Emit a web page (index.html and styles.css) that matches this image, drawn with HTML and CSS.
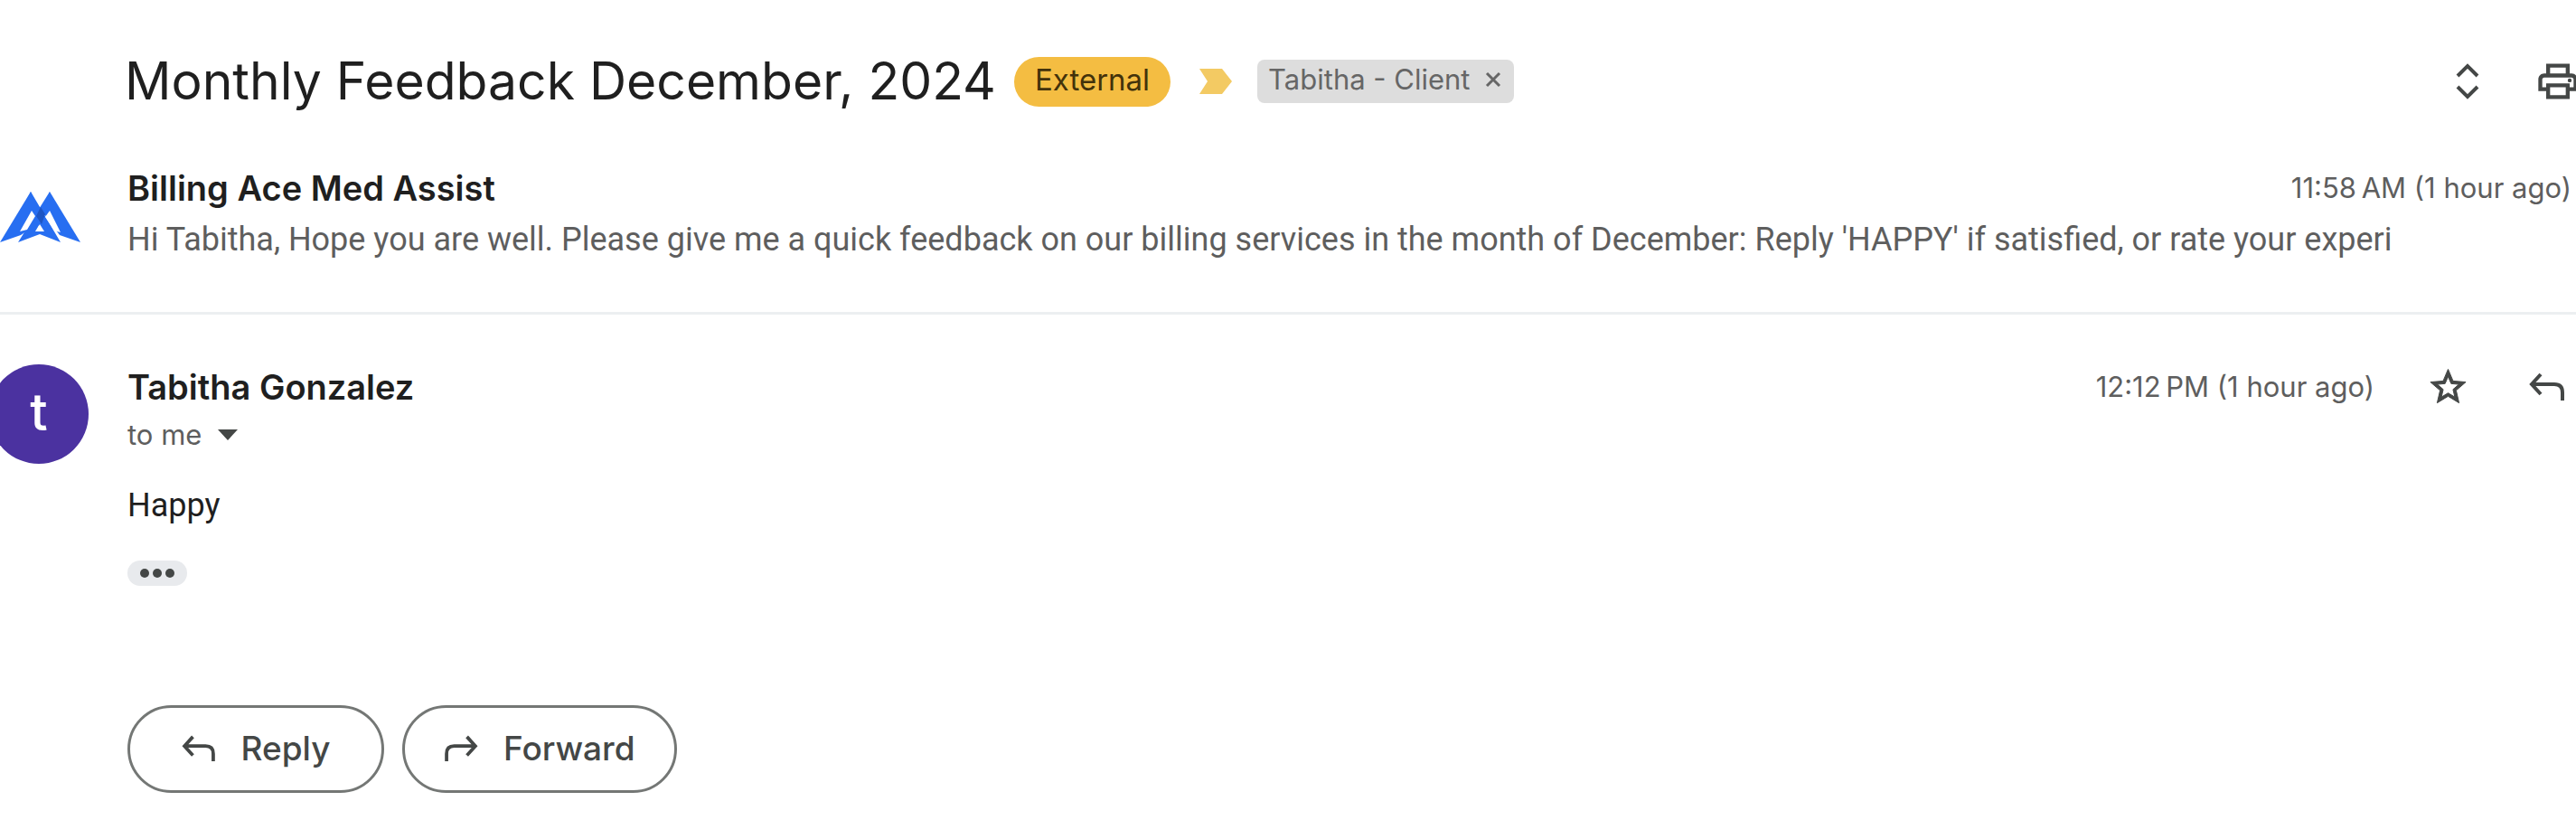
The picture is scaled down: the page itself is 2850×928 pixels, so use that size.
FILE: index.html
```html
<!DOCTYPE html>
<html lang="en">
<head>
	<meta charset="utf-8">
	<title>Monthly Feedback December, 2024</title>
	<link rel="stylesheet" href="styles.css">
</head>
<body>
	<main class="thread">
		<header class="subject">
			<h1>Monthly Feedback December, 2024</h1>
			<span class="external">External</span>
			<svg class="marker" viewBox="0 0 36 28"><path d="M0 0h25l11 14-11 14H0l9-14z" fill="#f3ca63"/></svg>
			<span class="label">Tabitha - Client
				<button class="remove" aria-label="Remove label">
					<svg viewBox="0 0 18 18"><path d="M2 2l14 14M16 2L2 16"/></svg>
				</button>
			</span>
			<div class="tools">
				<button aria-label="Expand all">
					<svg class="expand" viewBox="0 0 26 42"><path d="M2 15L13 4l11 11M2 27l11 11 11-11"/></svg>
				</button>
				<button aria-label="Print all">
					<svg class="print" viewBox="0 0 24 24"><path d="M19 8h-1V3H6v5H5c-1.660 0-3 1.340-3 3v6h4v4h12v-4h4v-6c0-1.660-1.340-3-3-3zM8 5h8v3H8V5zm8 12v2H8v-4h8v2zm2-2v-2H6v2H4v-4c0-.55.45-1 1-1h14c.55 0 1 .45 1 1v4h-2z"/><circle cx="18" cy="11.500" r="1"/></svg>
				</button>
			</div>
		</header>

		<article class="message closed">
			<svg class="logo" viewBox="0 0 90 56">
				<path fill="#276ef1" d="M34 0L0 56l23-8 12-8 9-15z"/>
				<path fill="#276ef1" d="M55 0l34 56-23-8L47 22z"/>
				<path fill="#276ef1" d="M55 0L20 56l24-9 23 9-33-56-6 12 7 10 12 22h-8l16-27z"/>
				<path fill="#fff" d="M35 21L22 44l8-2 9-15zM55 21l-5 7 10 15 7 2zM44 36l-4 8h9z"/>
				<path fill="#1e56c4" d="M45 17l5 8-4 11-6-9z"/>
			</svg>
			<div class="content">
				<div class="line">
					<h2>Billing Ace Med Assist</h2>
					<time>11:58&#8239;AM (1 hour ago)</time>
				</div>
				<p class="snippet">Hi Tabitha, Hope you are well. Please give me a quick feedback on our billing services in the month of December: Reply 'HAPPY' if satisfied, or rate your experi</p>
			</div>
		</article>

		<article class="message">
			<div class="avatar">t</div>
			<div class="content">
				<div class="line">
					<h2>Tabitha Gonzalez</h2>
					<time>12:12&#8239;PM (1 hour ago)</time>
					<button class="star" aria-label="Star">
						<svg viewBox="0 0 24 24"><path d="M22 9.240l-7.190-.62L12 2 9.190 8.630 2 9.240l5.460 4.730L5.820 21 12 17.270 18.180 21l-1.630-7.030L22 9.240zM12 15.400l-3.760 2.270 1-4.280-3.320-2.880 4.380-.38L12 6.100l1.710 4.040 4.380.38-3.320 2.880 1 4.280L12 15.400z"/></svg>
					</button>
					<button class="back" aria-label="Reply">
						<svg class="arrow" viewBox="0 0 40 32"><path d="M13 2L3 13l10 11M3 13h25q9 0 9 9v9"/></svg>
					</button>
				</div>
				<button class="to">to me <svg viewBox="0 0 22 12"><path d="M0 0h22L11 12z"/></svg></button>
				<p class="text">Happy</p>
				<button class="more" aria-label="Show trimmed content">
					<svg viewBox="0 0 38 10"><circle cx="5" cy="5" r="5"/><circle cx="19" cy="5" r="5"/><circle cx="33" cy="5" r="5"/></svg>
				</button>
				<div class="actions">
					<button><svg class="arrow" viewBox="0 0 40 32"><path d="M13 2L3 13l10 11M3 13h25q9 0 9 9v9"/></svg>Reply</button>
					<button><svg class="arrow" viewBox="0 0 40 32"><path d="M27 2l10 11-10 11M37 13H12q-9 0-9 9v9"/></svg>Forward</button>
				</div>
			</div>
		</article>
	</main>
</body>
</html>
```
FILE: styles.css
```css
*{
	box-sizing: border-box;
	margin: 0;
	padding: 0;
}
body{
	background: #fff;
	color: #1f1f1f;
	font-family: Inter, "Liberation Sans", sans-serif;
	overflow-x: hidden;
}
button{
	display: flex;
	align-items: center;
	border: 0;
	background: none;
	color: inherit;
	font: inherit;
	cursor: pointer;
}
svg{
	display: block;
	flex: none;
	fill: #444746;
}
.thread{
	overflow: hidden;
}

/* subject line */
.subject{
	display: flex;
	align-items: center;
	padding: 55px 0 0 138px;
}
h1{
	font-size: 57px;
	font-weight: 400;
	line-height: 70px;
	white-space: nowrap;
}
.external{
	height: 55px;
	margin-left: 20px;
	padding: 0 23px;
	border-radius: 28px;
	background: #f4bd42;
	color: #43320b;
	font-size: 33px;
	line-height: 51px;
}
.marker{
	width: 36px;
	height: 28px;
	margin: 0 28px 0 32px;
}
.label{
	display: flex;
	align-items: center;
	gap: 16px;
	height: 48px;
	padding: 0 14px 4px 12px;
	border-radius: 8px;
	background: #ddd;
	color: #666;
	font-size: 31px;
	line-height: 44px;
	white-space: nowrap;
}
.remove svg{
	width: 18px;
	height: 18px;
	stroke: #666;
	stroke-width: 3;
}
.tools{
	display: flex;
	align-items: center;
	gap: 61px;
	margin: 0 -6px 0 auto;
}
.expand{
	width: 26px;
	height: 42px;
	fill: none;
	stroke: #444746;
	stroke-width: 4;
}
.print{
	width: 52px;
	height: 52px;
}

/* messages */
.message{
	display: flex;
	padding-top: 55px;
}
.closed{
	padding: 58px 0 48px;
	border-bottom: 3px solid #eceff1;
}
.logo{
	width: 90px;
	height: 56px;
	margin: 29px 51px 0 0;
}
.avatar{
	flex: none;
	width: 110px;
	height: 110px;
	margin: 0 43px 0 -12px;
	border-radius: 50%;
	background: #4b32a0;
	color: #fff;
	font-size: 57px;
	font-weight: 500;
	line-height: 106px;
	text-align: center;
}
.content{
	flex: 1;
	min-width: 0;
}
.line{
	display: flex;
	align-items: center;
	height: 50px;
}
h2{
	font-size: 38px;
	font-weight: 600;
	line-height: 50px;
}
time{
	margin-left: auto;
	padding-right: 5px;
	color: #5e5e5e;
	font-size: 31px;
	line-height: 50px;
}
.snippet{
	overflow: hidden;
	color: #5e5e5e;
	font-family: Roboto, "Liberation Sans", sans-serif;
	font-size: 36px;
	line-height: 64px;
	white-space: nowrap;
}
.star{
	margin-left: 53px;
}
.star svg{
	width: 47px;
	height: 50px;
	stroke: #444746;
	stroke-width: .5;
}
.back{
	margin: 0 12px 0 66px;
}
.arrow{
	width: 40px;
	height: 32px;
	fill: none;
	stroke: #444746;
	stroke-width: 4;
}
.to{
	gap: 18px;
	color: #5e5e5e;
	font-size: 31px;
	line-height: 56px;
}
.to svg{
	width: 22px;
	height: 12px;
}
.text{
	margin-top: 25px;
	font-family: Roboto, "Liberation Sans", sans-serif;
	font-size: 36px;
	line-height: 50px;
}
.more{
	justify-content: center;
	width: 66px;
	height: 28px;
	margin-top: 36px;
	border-radius: 14px;
	background: #e8eaed;
}
.more svg{
	width: 38px;
	height: 10px;
}
.actions{
	display: flex;
	gap: 20px;
	margin-top: 132px;
}
.actions button{
	justify-content: center;
	gap: 28px;
	min-width: 284px;
	height: 97px;
	padding: 0 43px 2px;
	border: 3px solid #747775;
	border-radius: 49px;
	color: #444746;
	font-size: 37px;
	font-weight: 500;
}
.actions .arrow{
	width: 38px;
	height: 30px;
}
```
